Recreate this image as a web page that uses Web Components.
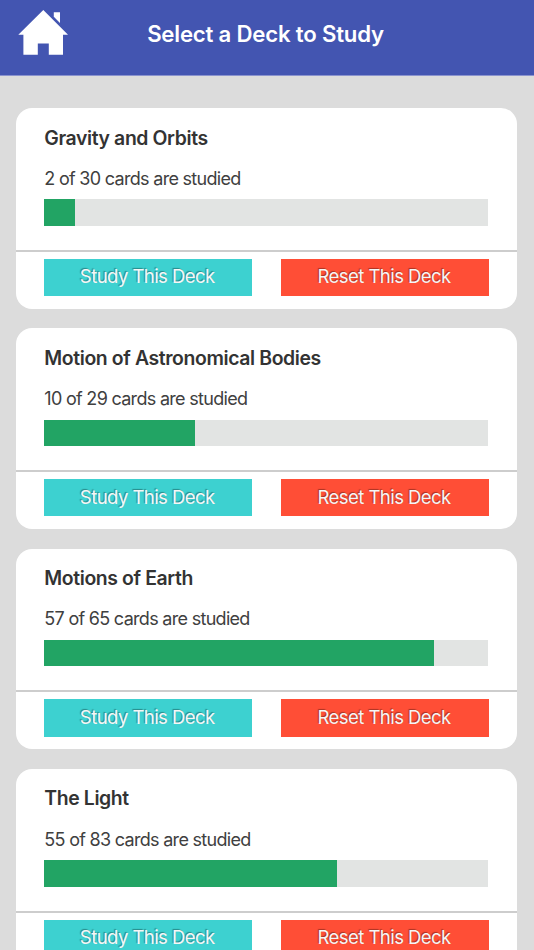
<!DOCTYPE html>
<html lang="en">
<head>
<meta charset="UTF-8">
<title>Select a Deck to Study</title>
<style>
    body {
        margin: 0;
        height: 950px;
        overflow: hidden;
        background: #dcdcdc;
        color: #333;
        font-family: Inter, "Liberation Sans", sans-serif;
    }

    main {
        display: grid;
        gap: 19.7px;
        padding: 32.2px 16.6px 0 16.3px;
    }
</style>
</head>
<body>
<app-header>Select a Deck to Study</app-header>
<main>
    <deck-card studied="2" total="30">Gravity and Orbits</deck-card>
    <deck-card studied="10" total="29">Motion of Astronomical Bodies</deck-card>
    <deck-card studied="57" total="65">Motions of Earth</deck-card>
    <deck-card studied="55" total="83">The Light</deck-card>
</main>

<script>
class AppHeader extends HTMLElement {
    constructor() {
        super();
        const shadow = this.attachShadow({ mode: 'open' });
        shadow.innerHTML = `
            <style>
                :host {
                    display: grid;
                    grid-template-columns: 72px 1fr 75px;
                    box-sizing: border-box;
                    height: 76px;
                    border-bottom: 1px solid #8a93ce;
                    background: #4355b1;
                    color: #fff;
                }

                svg {
                    margin: 10px 0 0 18px;
                }

                h1 {
                    margin: 20px 0 0;
                    font-size: 22.2px;
                    font-weight: 600;
                    line-height: 28px;
                    letter-spacing: -0.2px;
                    text-align: center;
                    white-space: nowrap;
                }
            </style>
            <svg width="51" height="46" viewBox="0 0 51 46" fill="#fff">
                <path d="M25.3 0L50 24.8H45V44.8H30.8V33.5H19.8V44.8H5.4V24.8H.3Z"/>
                <path d="M35.8 2.3H42V13L35.8 6.8Z"/>
            </svg>
            <h1><slot></slot></h1>
        `;
    }
}

class DeckProgress extends HTMLElement {
    constructor() {
        super();
        const shadow = this.attachShadow({ mode: 'open' });
        shadow.innerHTML = `
            <style>
                :host {
                    display: block;
                    height: 26.4px;
                    background: #e2e4e3;
                }

                div {
                    height: 100%;
                    background: #22a464;
                }
            </style>
            <div></div>
        `;
    }

    connectedCallback() {
        this.shadowRoot.querySelector('div').style.width = this.getAttribute('value') + '%';
    }
}

class DeckButton extends HTMLElement {
    constructor() {
        super();
        const shadow = this.attachShadow({ mode: 'open' });
        shadow.innerHTML = `
            <style>
                :host {
                    display: block;
                }

                button {
                    display: block;
                    width: 100%;
                    height: 37.4px;
                    padding: 0 2px 2px 0;
                    border: none;
                    background: #3dd1d0;
                    color: #f6f6f6;
                    font: 400 18.5px/34px Inter, "Liberation Sans", sans-serif;
                    letter-spacing: -0.55px;
                    text-shadow: -1px -1px 1px rgba(0, 0, 0, 0.35);
                    cursor: pointer;
                }

                :host([kind="reset"]) button {
                    background: #ff4e36;
                }
            </style>
            <button><slot></slot></button>
        `;
    }
}

class DeckCard extends HTMLElement {
    constructor() {
        super();
        this.attachShadow({ mode: 'open' });
    }

    connectedCallback() {
        const studied = Number(this.getAttribute('studied'));
        const total = Number(this.getAttribute('total'));
        const percent = Math.round(studied / total * 100);

        this.shadowRoot.innerHTML = `
            <style>
                :host {
                    display: block;
                    box-sizing: border-box;
                    height: 200.6px;
                    border-radius: 16px;
                    background: #fff;
                }

                .info {
                    box-sizing: border-box;
                    height: 143.7px;
                    padding: 16.4px 29.9px 0 28px;
                    border-bottom: 2px solid #cdcdcd;
                }

                h2 {
                    margin: 0;
                    font-size: 19.4px;
                    font-weight: 600;
                    line-height: 26px;
                    letter-spacing: -0.38px;
                }

                p {
                    margin: 15.2px 0 7.6px;
                    font-size: 18px;
                    line-height: 26px;
                    letter-spacing: -0.7px;
                    color: #404040;
                }

                .actions {
                    display: grid;
                    grid-template-columns: 1fr 1fr;
                    gap: 29px;
                    padding: 6.8px 28.4px 0 28px;
                }
            </style>
            <div class="info">
                <h2><slot></slot></h2>
                <p>${studied} of ${total} cards are studied</p>
                <deck-progress value="${percent}"></deck-progress>
            </div>
            <div class="actions">
                <deck-button>Study This Deck</deck-button>
                <deck-button kind="reset">Reset This Deck</deck-button>
            </div>
        `;
    }
}

customElements.define('app-header', AppHeader);
customElements.define('deck-progress', DeckProgress);
customElements.define('deck-button', DeckButton);
customElements.define('deck-card', DeckCard);
</script>
</body>
</html>
